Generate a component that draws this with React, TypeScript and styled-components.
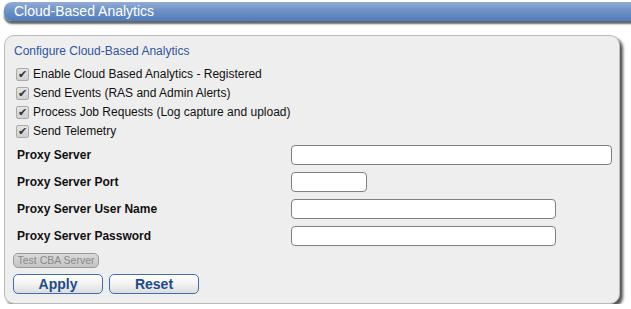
import React from 'react'
import styled, { createGlobalStyle } from 'styled-components'

const Global = createGlobalStyle`
  body {
    margin: 0;
    background: #fff;
    font-family: "Liberation Sans", Arial, sans-serif;
    overflow: hidden;
  }
`

const Page = styled.div`
  padding: 2px 0 0 4px;
  width: 631px;
  box-sizing: border-box;
`

const Header = styled.div`
  height: 19px;
  width: 640px;
  border-radius: 8px 0 0 8px;
  background: linear-gradient(180deg, #93acd3 0%, #6e92c6 45%, #4f7cbd 100%);
  box-shadow: 0 3px 2px #666;
  color: #fff;
  font-size: 14px;
  line-height: 19px;
  padding-left: 10px;
  box-sizing: border-box;
`

const Panel = styled.div`
  margin-top: 14px;
  width: 616px;
  height: 269px;
  box-sizing: border-box;
  background: #eee;
  border: 1px solid #bbb;
  border-radius: 10px;
  box-shadow: 3px 3px 3px #555;
  padding: 7px 8px 0 8px;
`

const Title = styled.div`
  color: #2f55a0;
  font-size: 12px;
  line-height: 16px;
  margin: 0 0 9px 1px;
`

const CheckList = styled.div`
  display: flex;
  flex-direction: column;
  gap: 6px;
  margin-left: 3px;
`

const CheckRow = styled.label`
  display: flex;
  align-items: center;
  font-size: 12px;
  line-height: 13px;
  color: #111;
`

const Box = styled.input`
  appearance: none;
  position: relative;
  width: 13px;
  height: 13px;
  margin: 0 4px 0 0;
  box-sizing: border-box;
  border: 1px solid #aaa;
  border-radius: 2px;
  background: linear-gradient(180deg, #e4e4e4 0%, #d0d0d0 100%);
  &:checked::after {
    content: '✔';
    position: absolute;
    left: 1px;
    top: -1px;
    font-size: 11px;
    line-height: 13px;
    color: #333;
  }
`

const Fields = styled.div`
  margin-top: 7px;
  display: flex;
  flex-direction: column;
  gap: 7px;
`

const FieldRow = styled.div`
  display: grid;
  grid-template-columns: 278px 1fr;
  align-items: center;
`

const Label = styled.span`
  font-size: 12px;
  font-weight: bold;
  color: #111;
  padding-left: 4px;
`

const TextInput = styled.input<{ w: number }>`
  width: ${p => p.w}px;
  height: 20px;
  box-sizing: border-box;
  border: 1px solid #808080;
  border-radius: 4px;
  background: #fff;
  outline: none;
`

const TestButton = styled.button`
  margin-top: 7px;
  display: block;
  height: 15px;
  width: 86px;
  padding: 0;
  font-family: inherit;
  font-size: 10.5px;
  line-height: 13px;
  color: #8a8a8a;
  background: linear-gradient(180deg, #dadada 0%, #c4c4c4 100%);
  border: 1px solid #9a9a9a;
  border-radius: 5px;
`

const Actions = styled.div`
  display: flex;
  gap: 6px;
  margin-top: 6px;
`

const ActionButton = styled.button`
  width: 90px;
  height: 20px;
  padding: 0;
  font-family: inherit;
  font-size: 14px;
  font-weight: bold;
  color: #1f4a8a;
  background: linear-gradient(180deg, #ffffff 0%, #f2f2f2 50%, #dcdcdc 100%);
  border: 1px solid #3e6fb5;
  border-radius: 5px;
`

const checks = [
  'Enable Cloud Based Analytics - Registered',
  'Send Events (RAS and Admin Alerts)',
  'Process Job Requests (Log capture and upload)',
  'Send Telemetry',
]

const fields = [
  { label: 'Proxy Server', w: 321 },
  { label: 'Proxy Server Port', w: 76 },
  { label: 'Proxy Server User Name', w: 265 },
  { label: 'Proxy Server Password', w: 265 },
]

export default function App() {
  return (
    <Page>
      <Global />
      <Header>Cloud-Based Analytics</Header>
      <Panel>
        <Title>Configure Cloud-Based Analytics</Title>
        <CheckList>
          {checks.map(c => (
            <CheckRow key={c}>
              <Box type="checkbox" defaultChecked />
              {c}
            </CheckRow>
          ))}
        </CheckList>
        <Fields>
          {fields.map(f => (
            <FieldRow key={f.label}>
              <Label>{f.label}</Label>
              <TextInput w={f.w} />
            </FieldRow>
          ))}
        </Fields>
        <TestButton disabled>Test CBA Server</TestButton>
        <Actions>
          <ActionButton>Apply</ActionButton>
          <ActionButton>Reset</ActionButton>
        </Actions>
      </Panel>
    </Page>
  )
}
